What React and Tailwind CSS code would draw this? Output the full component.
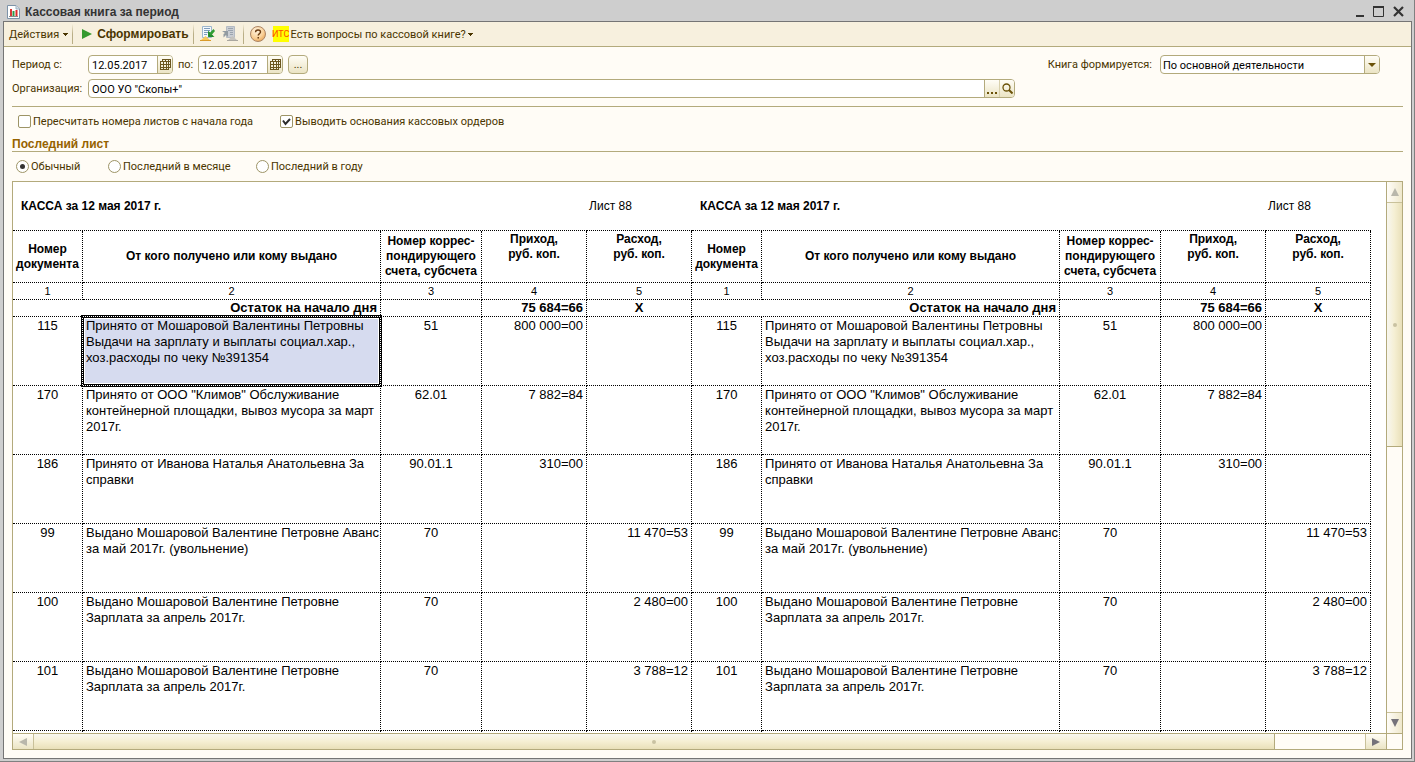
import React from "react";

const HEADER = [
  { text: "Номер\nдокумента", align: "align-middle" },
  { text: "От кого получено или кому выдано", align: "align-middle" },
  { text: "Номер коррес-\nпондирующего\nсчета, субсчета", align: "align-middle" },
  { text: "Приход,\nруб. коп.", align: "pt-px align-top" },
  { text: "Расход,\nруб. коп.", align: "pt-px align-top" },
];

const ROWS = [
  { no: "115", text: "Принято от Мошаровой Валентины Петровны\nВыдачи на зарплату и выплаты социал.хар.,\nхоз.расходы по чеку №391354", acc: "51", inc: "800 000=00", out: "" },
  { no: "170", text: "Принято от ООО \"Климов\" Обслуживание\nконтейнерной площадки, вывоз мусора за март\n2017г.", acc: "62.01", inc: "7 882=84", out: "" },
  { no: "186", text: "Принято от Иванова Наталья Анатольевна За\nсправки", acc: "90.01.1", inc: "310=00", out: "" },
  { no: "99", text: "Выдано Мошаровой Валентине Петровне Аванс\nза май 2017г. (увольнение)", acc: "70", inc: "", out: "11 470=53" },
  { no: "100", text: "Выдано Мошаровой Валентине Петровне\nЗарплата за апрель 2017г.", acc: "70", inc: "", out: "2 480=00" },
  { no: "101", text: "Выдано Мошаровой Валентине Петровне\nЗарплата за апрель 2017г.", acc: "70", inc: "", out: "3 788=12" },
  { no: "", text: "", acc: "", inc: "", out: "" },
];

const HALVES = [0, 1];
const CELL = "border-r border-b border-dotted border-black";
const BEVEL = "bg-linear-to-b from-[#fffdf6] to-[#ebe4c4]";

function Caret() {
  return (
    <svg width="5" height="3" viewBox="0 0 5 3" fill="currentColor" shapeRendering="crispEdges" aria-hidden="true">
      <path d="M0 0h5v1H4v1H3v1H2V2H1V1H0z" />
    </svg>
  );
}

function Arrow({ d, color }) {
  return (
    <svg width="8" height="8" viewBox="0 0 8 8" fill={color} aria-hidden="true">
      <path d={d} />
    </svg>
  );
}

function Separator() {
  return <span className="h-5 w-px bg-linear-to-b from-[#f7f0de] via-[#b9ae86] to-[#b9ae86]" />;
}

function WindowIcon() {
  return (
    <svg width="13" height="14" viewBox="0 0 13 14" aria-hidden="true">
      <path d="M.5.5h8.500l3.500 3.500v9.500H.5z" fill="#fff" stroke="#7d93a8" />
      <path d="M9 .5V4h3.500" fill="#d5e0ea" stroke="#9fb0c0" />
      <path d="M3 4h2v7H3z" fill="#d63a3a" />
      <path d="M5.500 6h2v5h-2z" fill="#2d9b4a" />
      <path d="M8.500 5h2v6h-2z" fill="#e02b2b" />
      <path d="M2 11.500h9" stroke="#8a8a8a" />
    </svg>
  );
}

function SaveSettingsIcon() {
  return (
    <svg width="16" height="16" viewBox="0 0 16 16" aria-hidden="true">
      <path d="M2.500.5h9v11h-9z" fill="#f3f8fc" stroke="#9db6cc" />
      <path d="M4 2.500h6M4 4.500h6M4 6.500h4M4 8.500h3" stroke="#7f9dbd" />
      <path d="M0 15l5.500-5 5.500 5z" fill="#f6c95c" />
      <path d="M0 14.500h11" stroke="#d99a2a" />
      <path d="M13.500 3l1.500 2-3 3.500 2.500 2.500H8V4.500l2 2z" fill="#2f9e35" />
      <path d="M9 6v4h4" fill="none" stroke="#1c7a28" />
    </svg>
  );
}

function RestoreSettingsIcon() {
  return (
    <svg width="16" height="16" viewBox="0 0 16 16" aria-hidden="true">
      <path d="M4.500.5h8v11h-8z" fill="#c9cdd3" stroke="#b4bac2" />
      <path d="M6 2.500h5M6 4.500h5M8 6.500h3M8 8.500h3" stroke="#9ba4af" />
      <path d="M5 15l5.500-5 5.500 5z" fill="#c4c2bd" />
      <path d="M5 14.500h11" stroke="#aaa7a0" />
      <path d="M0 5h6v6L4 9l-2.500 2.500V8L3 7z" fill="#929ba1" />
    </svg>
  );
}

function CalendarIcon() {
  return (
    <svg width="11" height="11" viewBox="0 0 11 11" fill="none" stroke="#6b5620" shapeRendering="crispEdges" aria-hidden="true">
      <path d="M2.500 2V.5h8v8H9M5.500 0v3M8.500 0v3M8 2.500h2M8 5.500h2" />
      <path d="M.5 2.500h8v8h-8zM3.500 3v8M6.500 3v8M0 5.500h9M0 8.500h9" />
    </svg>
  );
}

function HelpIcon() {
  return (
    <svg width="16" height="16" viewBox="0 0 16 16" aria-hidden="true">
      <defs>
        <radialGradient id="help" cx="0.4" cy="0.3" r="0.8">
          <stop offset="0" stopColor="#fff3df" />
          <stop offset="0.6" stopColor="#f9cf95" />
          <stop offset="1" stopColor="#e39a48" />
        </radialGradient>
      </defs>
      <circle cx="8" cy="8" r="7.500" fill="url(#help)" stroke="#ac8565" />
      <path d="M5.500 6.300C5.500 4.600 6.600 4 8 4s2.500.8 2.500 2.100C10.500 7.600 8.200 7.700 8.200 9.600" fill="none" stroke="#6b3d12" strokeWidth="1.400" />
      <path d="M7.500 11h1.500v1.500H7.500z" fill="#6b3d12" />
    </svg>
  );
}

function DateField({ id, label, value }) {
  return (
    <>
      <label htmlFor={id}>{label}</label>
      <span className="flex h-[19px] w-[85px] overflow-hidden rounded-[4px] border border-[#b3aa7c] bg-white">
        <input id={id} defaultValue={value} className="w-0 flex-1 pt-px pl-[3px] text-black outline-none" />
        <button type="button" aria-label="Календарь" className={`flex w-[15px] items-center justify-center border-l border-[#b3aa7c] ${BEVEL}`}>
          <CalendarIcon />
        </button>
      </span>
    </>
  );
}

function Check({ label, checked }) {
  return (
    <label className="flex items-center gap-[2px]">
      <span className="relative flex size-[13px]">
        <input type="checkbox" defaultChecked={checked} className="peer size-[13px] appearance-none rounded-[2px] border border-[#9d9466] bg-white" />
        <svg className="pointer-events-none absolute inset-0 hidden peer-checked:block" width="13" height="13" viewBox="0 0 13 13" aria-hidden="true">
          <path d="M3 5.500l2.500 3.500L10 4" fill="none" stroke="#2b2b2b" strokeWidth="2" />
        </svg>
      </span>
      {label}
    </label>
  );
}

function Radio({ label, checked, className }) {
  return (
    <label className={`flex items-center gap-[2px] ${className}`}>
      <span className="relative flex size-[13px]">
        <input type="radio" name="last-sheet" defaultChecked={checked} className="peer size-[13px] appearance-none rounded-full border border-[#9d9466] bg-white" />
        <span className="pointer-events-none absolute inset-[4px] hidden rounded-full bg-[#333] peer-checked:block" />
      </span>
      {label}
    </label>
  );
}

function SelectionFrame() {
  return (
    <span className="absolute -inset-[2px] border border-black bg-white">
      <span className="block h-full border border-dotted border-black">
        <span className="block h-full border border-black">
          <span className="block h-full border border-white bg-[#d6dbef]" />
        </span>
      </span>
    </span>
  );
}

function Sheet() {
  return (
    <table className="w-[1358px] table-fixed border-separate border-spacing-0 text-[13px] leading-4 text-black">
      <colgroup>
        {HALVES.map((h) => (
          <React.Fragment key={h}>
            <col className="w-[70px]" />
            <col className="w-[298px]" />
            <col className="w-[101px]" />
            <col className="w-[105px]" />
            <col className="w-[105px]" />
          </React.Fragment>
        ))}
      </colgroup>
      <thead>
        <tr className="h-[49px] text-xs">
          {HALVES.map((h) => (
            <React.Fragment key={h}>
              <th colSpan={4} className="border-b border-dotted border-black pl-2 text-left align-middle">КАССА за 12 мая 2017 г.</th>
              <td className="border-b border-dotted border-black pl-[2px] align-middle">Лист 88</td>
            </React.Fragment>
          ))}
        </tr>
        <tr className="h-[52px] text-xs leading-[15px]">
          {HALVES.map((h) => HEADER.map((c) => (
            <th key={h + c.text} className={`whitespace-pre ${CELL} ${c.align}`}>{c.text}</th>
          )))}
        </tr>
        <tr className="h-[17px] text-[11px]">
          {HALVES.map((h) => [1, 2, 3, 4, 5].map((n) => (
            <td key={`${h}-${n}`} className={`text-center ${CELL}`}>{n}</td>
          )))}
        </tr>
      </thead>
      <tbody>
        <tr className="h-[17px] font-bold">
          {HALVES.map((h) => (
            <React.Fragment key={h}>
              <td colSpan={2} className={`pr-[3px] text-right ${CELL}`}>Остаток на начало дня</td>
              <td className={CELL} />
              <td className={`pr-[3px] text-right ${CELL}`}>75 684=66</td>
              <td className={`text-center ${CELL}`}>X</td>
            </React.Fragment>
          ))}
        </tr>
        {ROWS.map((r, i) => (
          <tr key={i} className="h-[69px] align-top">
            {HALVES.map((h) => (
              <React.Fragment key={h}>
                <td className={`pt-px text-center ${CELL}`}>{r.no}</td>
                <td className={`relative pt-px pl-[3px] whitespace-pre ${CELL}`}>
                  {i === 0 && h === 0 && <SelectionFrame />}
                  <span className="relative">{r.text}</span>
                </td>
                <td className={`pt-px text-center ${CELL}`}>{r.acc}</td>
                <td className={`pt-px pr-[3px] text-right ${CELL}`}>{r.inc}</td>
                <td className={`pt-px pr-[3px] text-right ${CELL}`}>{r.out}</td>
              </React.Fragment>
            ))}
          </tr>
        ))}
      </tbody>
    </table>
  );
}

export default function App() {
  return (
    <div className="flex h-screen flex-col overflow-hidden border-r border-b border-[#808080] bg-[#cecece] pr-[2px] pb-[2px] pl-[3px] font-['Roboto','Liberation_Sans',sans-serif] text-[11px] leading-[17px] text-[#4a3500]">
      <header className="flex h-[21px] shrink-0 items-center pt-[2px] pr-1 pl-1 text-[#333]">
        <WindowIcon />
        <h1 className="ml-[5px] flex-1 font-['Liberation_Sans',Arial,sans-serif] text-xs font-bold">Кассовая книга за период</h1>
        <button type="button" aria-label="Свернуть" className="flex h-4 w-5 items-center justify-center">
          <svg width="11" height="11" viewBox="0 0 11 11" aria-hidden="true"><path d="M3 9h8v2H3z" fill="#333" /></svg>
        </button>
        <button type="button" aria-label="Развернуть" className="flex h-4 w-5 items-center justify-center">
          <svg width="11" height="11" viewBox="0 0 11 11" aria-hidden="true"><path d="M.5.5h10v10H.5z" fill="none" stroke="#333" /><path d="M0 0h11v2H0z" fill="#333" /></svg>
        </button>
        <button type="button" aria-label="Закрыть" className="flex h-4 w-5 items-center justify-center">
          <svg width="11" height="11" viewBox="0 0 11 11" aria-hidden="true"><path d="M1 1l9 9M10 1l-9 9" stroke="#333" strokeWidth="2.200" /></svg>
        </button>
      </header>

      <main className="flex min-h-0 flex-1 flex-col border border-[#757575] bg-[#fffcf6]">
        <nav className="flex h-[25px] shrink-0 items-center border-b border-[#b3aa7c] bg-[#f7f0de] pl-[5px]">
          <button type="button" className="flex items-center gap-1">Действия<Caret /></button>
          <span className="ml-1 flex"><Separator /></span>
          <button type="button" className="ml-[9px] flex items-center gap-1 font-['Liberation_Sans',Arial,sans-serif] text-xs leading-[17px] font-bold">
            <svg width="11" height="10" viewBox="0 0 11 10" aria-hidden="true"><path d="M0 0l10 5-10 5z" fill="#359a2f" /></svg>
            Сформировать
          </button>
          <span className="ml-1 flex"><Separator /></span>
          <button type="button" aria-label="Сохранить настройки" className="ml-[6px]"><SaveSettingsIcon /></button>
          <button type="button" aria-label="Восстановить настройки" className="ml-[6px]"><RestoreSettingsIcon /></button>
          <span className="ml-[5px] flex"><Separator /></span>
          <button type="button" aria-label="Справка" className="ml-[6px]"><HelpIcon /></button>
          <button type="button" className="ml-[7px] flex items-center gap-[2px]">
            <span className="flex size-4 items-center justify-center bg-[#ffff00] text-[9px] text-[#ff4a00]">ИТС</span>
            Есть вопросы по кассовой книге?
            <Caret />
          </button>
        </nav>

        <div className="flex min-h-0 flex-1 flex-col px-2 pt-2 pb-2">
          <div className="flex h-[19px] shrink-0 items-center">
            <div className="flex items-center gap-[5px]">
              <span className="grid grid-cols-[76px_85px] items-center">
                <DateField id="from" label="Период с:" value="12.05.2017" />
              </span>
              <span className="grid grid-cols-[20px_85px] items-center">
                <DateField id="to" label="по:" value="12.05.2017" />
              </span>
              <button type="button" aria-label="Выбрать период" className={`h-[19px] w-5 rounded-[4px] border border-[#b3aa7c] ${BEVEL}`}>...</button>
            </div>
            <div className="mr-[23px] ml-auto flex items-center gap-2">
              <label htmlFor="book">Книга формируется:</label>
              <span className="relative flex h-[19px] w-[220px] overflow-hidden rounded-[4px] border border-[#b3aa7c] bg-white">
                <select id="book" className="w-full appearance-none pt-px pl-[2px] text-black outline-none">
                  <option>По основной деятельности</option>
                </select>
                <span className={`pointer-events-none absolute inset-y-0 right-0 flex w-[15px] items-center justify-center border-l border-[#b3aa7c] ${BEVEL}`}>
                  <svg width="8" height="4" viewBox="0 0 8 4" aria-hidden="true"><path d="M0 0h8L4 4z" fill="#6b5208" /></svg>
                </span>
              </span>
            </div>
          </div>

          <div className="mt-[5px] grid h-[19px] shrink-0 grid-cols-[76px_minmax(0,927px)] items-center">
            <label htmlFor="org">Организация:</label>
            <span className="flex h-[19px] overflow-hidden rounded-[4px] border border-[#b3aa7c] bg-white">
              <input id="org" defaultValue={'ООО УО "Скопы+"'} className="w-0 flex-1 pt-px pl-[3px] text-black outline-none" />
              <button type="button" aria-label="Выбрать" className={`flex w-[15px] items-end justify-center border-l border-[#b3aa7c] pb-[3px] ${BEVEL}`}>
                <svg width="10" height="2" viewBox="0 0 10 2" aria-hidden="true"><path d="M0 0h2v2H0zM4 0h2v2H4zM8 0h2v2H8z" fill="#6b5208" /></svg>
              </button>
              <button type="button" aria-label="Открыть" className={`flex w-[15px] items-center justify-center border-l border-[#d8d0ac] ${BEVEL}`}>
                <svg width="11" height="11" viewBox="0 0 11 11" fill="none" stroke="#6b5208" aria-hidden="true"><circle cx="4.500" cy="4.500" r="3.500" strokeWidth="1.300" /><path d="M7 7l3.500 3.500" strokeWidth="2" /></svg>
              </button>
            </span>
          </div>

          <div className="mt-2 flex h-[30px] shrink-0 items-center gap-[27px] border-t border-[#b3aa7c] pl-[6px]">
            <Check label="Пересчитать номера листов с начала года" />
            <Check label="Выводить основания кассовых ордеров" checked />
          </div>

          <h2 className="h-4 shrink-0 border-b border-[#b3aa7c] font-['Liberation_Sans',Arial,sans-serif] text-xs leading-4 font-bold text-[#966200]">Последний лист</h2>
          <div className="flex h-[29px] shrink-0 items-center pl-1">
            <Radio label="Обычный" checked className="w-[92px]" />
            <Radio label="Последний в месяце" className="w-[148px]" />
            <Radio label="Последний в году" className="" />
          </div>

          <section className="grid min-h-0 flex-1 grid-cols-[minmax(0,1fr)_16px] grid-rows-[minmax(0,1fr)_16px] border border-[#b3aa7c]">
            <div className="overflow-hidden bg-white font-['Liberation_Sans',Arial,sans-serif]">
              <Sheet />
            </div>
            <div className="flex flex-col border-l border-[#b3aa7c]">
              <button type="button" aria-label="Вверх" className="flex h-[21px] shrink-0 items-center justify-center border-b border-[#c9c19a] bg-linear-to-r from-[#fffdf8] to-[#efe8cc]">
                <Arrow d="M4 0l4 8H0z" color="#b9b7ab" />
              </button>
              <div className="flex h-[244px] items-center justify-center border-b border-[#b3aa7c] bg-linear-to-r from-[#f8f7f0] via-[#f5efd3] to-[#e9e0b9]">
                <span className="size-1 rounded-full bg-[#c9c2a2]" />
              </div>
              <button type="button" aria-label="Вниз" className="mt-auto flex h-[21px] shrink-0 items-center justify-center border-t border-[#c9c19a] bg-linear-to-r from-[#fffdf8] to-[#efe8cc]">
                <Arrow d="M0 0h8L4 8z" color="#74727a" />
              </button>
            </div>
            <div className="flex border-t border-[#b3aa7c]">
              <button type="button" aria-label="Влево" className={`flex w-[21px] shrink-0 items-center justify-center border-r border-[#c9c19a] ${BEVEL}`}>
                <Arrow d="M8 0v8L0 4z" color="#b9b7ab" />
              </button>
              <div className="mr-[90px] flex flex-1 items-center justify-center border-r border-[#b3aa7c] bg-linear-to-b from-[#f8f7f0] via-[#f5efd3] to-[#e9e0b9]">
                <span className="size-1 rounded-full bg-[#c9c2a2]" />
              </div>
              <button type="button" aria-label="Вправо" className={`flex w-[21px] shrink-0 items-center justify-center border-l border-[#c9c19a] ${BEVEL}`}>
                <Arrow d="M0 0l8 4-8 4z" color="#74727a" />
              </button>
            </div>
            <div className="border-t border-l border-[#b3aa7c]" />
          </section>
        </div>
      </main>
    </div>
  );
}
